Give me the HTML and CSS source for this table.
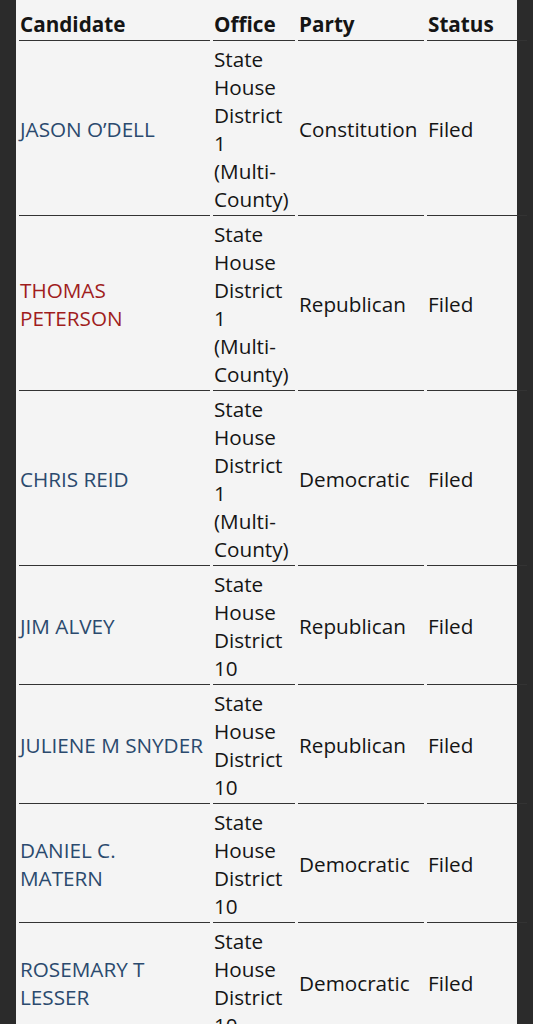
FILE: index.html
```html
<!DOCTYPE html>
<html lang="en">
<head>
<meta charset="utf-8">
<title>Candidates</title>
<link rel="stylesheet" href="styles.css">
</head>
<body>
<div class="page">
  <table class="cands">
    <thead>
      <tr>
        <th class="c-name">Candidate</th>
        <th class="c-office">Office</th>
        <th class="c-party">Party</th>
        <th class="c-status">Status</th>
      </tr>
    </thead>
    <tbody>
      <tr>
        <td class="name"><a class="cand blue" href="#">JASON O’DELL</a></td>
        <td>State House District 1 (Multi-County)</td>
        <td>Constitution</td>
        <td>Filed</td>
      </tr>
      <tr>
        <td class="name"><a class="cand red" href="#">THOMAS PETERSON</a></td>
        <td>State House District 1 (Multi-County)</td>
        <td>Republican</td>
        <td>Filed</td>
      </tr>
      <tr>
        <td class="name"><a class="cand blue" href="#">CHRIS REID</a></td>
        <td>State House District 1 (Multi-County)</td>
        <td>Democratic</td>
        <td>Filed</td>
      </tr>
      <tr>
        <td class="name"><a class="cand blue" href="#">JIM ALVEY</a></td>
        <td>State House District 10</td>
        <td>Republican</td>
        <td>Filed</td>
      </tr>
      <tr>
        <td class="name"><a class="cand blue" href="#">JULIENE M SNYDER</a></td>
        <td>State House District 10</td>
        <td>Republican</td>
        <td>Filed</td>
      </tr>
      <tr>
        <td class="name"><a class="cand blue" href="#">DANIEL C. MATERN</a></td>
        <td>State House District 10</td>
        <td>Democratic</td>
        <td>Filed</td>
      </tr>
      <tr>
        <td class="name"><a class="cand blue" href="#">ROSEMARY T LESSER</a></td>
        <td>State House District 10</td>
        <td>Democratic</td>
        <td>Filed</td>
      </tr>
    </tbody>
  </table>
</div>
</body>
</html>
```
FILE: styles.css
```css
html, body {
  margin: 0;
  padding: 0;
  background: #2b2b2b;
  overflow: hidden;
}
body {
  font-family: "Open Sans", "Liberation Sans", sans-serif;
  font-size: 20.7px;
  line-height: 28px;
  color: #151515;
}
.page {
  width: 501px;
  margin-left: 16px;
  background: #f4f4f4;
  height: 1024px;
  padding-top: 6px;
  box-sizing: border-box;
}
.cands {
  width: 514px;
  min-width: 514px;
  border-spacing: 3px 2px;
  border-collapse: separate;
}
.cands th,
.cands td {
  box-sizing: border-box;
  padding: 2px 2px 2px 1px;
  border-bottom: 1px solid #333;
  text-align: left;
  vertical-align: middle;
}
.cands th {
  font-weight: 700;
}
.cands td.name {
  padding-right: 7px;
}
.c-name { width: 191px; }
.c-office { width: 82px; }
.c-party { width: 126px; }
.c-status { width: 100px; }
.cand {
  text-decoration: none;
}
.blue { color: #2b4a6e; }
.red { color: #a01d1d; }
```
